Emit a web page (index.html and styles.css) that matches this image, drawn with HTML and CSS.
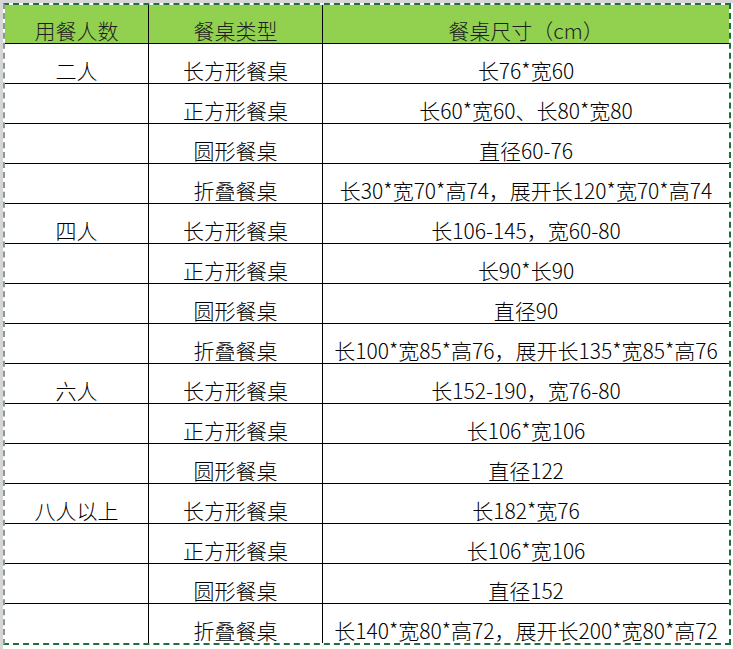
FILE: index.html
```html
<!DOCTYPE html>
<html lang="zh-CN">
<head>
<meta charset="utf-8">
<title>餐桌尺寸</title>
<link rel="stylesheet" href="styles.css">
</head>
<body>
<div class="page">
  <div class="frame">
    <div class="grid">
      <div class="c h">用餐人数</div><div class="c h">餐桌类型</div><div class="c h last">餐桌尺寸（cm）</div>

      <div class="c">二人</div><div class="c">长方形餐桌</div><div class="c last">长76*宽60</div>
      <div class="c"></div><div class="c">正方形餐桌</div><div class="c last">长60*宽60、长80*宽80</div>
      <div class="c"></div><div class="c">圆形餐桌</div><div class="c last">直径60-76</div>
      <div class="c"></div><div class="c">折叠餐桌</div><div class="c last">长30*宽70*高74，展开长120*宽70*高74</div>

      <div class="c">四人</div><div class="c">长方形餐桌</div><div class="c last">长106-145，宽60-80</div>
      <div class="c"></div><div class="c">正方形餐桌</div><div class="c last">长90*长90</div>
      <div class="c"></div><div class="c">圆形餐桌</div><div class="c last">直径90</div>
      <div class="c"></div><div class="c">折叠餐桌</div><div class="c last">长100*宽85*高76，展开长135*宽85*高76</div>

      <div class="c">六人</div><div class="c">长方形餐桌</div><div class="c last">长152-190，宽76-80</div>
      <div class="c"></div><div class="c">正方形餐桌</div><div class="c last">长106*宽106</div>
      <div class="c"></div><div class="c">圆形餐桌</div><div class="c last">直径122</div>

      <div class="c">八人以上</div><div class="c">长方形餐桌</div><div class="c last">长182*宽76</div>
      <div class="c"></div><div class="c">正方形餐桌</div><div class="c last">长106*宽106</div>
      <div class="c"></div><div class="c">圆形餐桌</div><div class="c last">直径152</div>
      <div class="c b"></div><div class="c b">折叠餐桌</div><div class="c b last">长140*宽80*高72，展开长200*宽80*高72</div>
    </div>
  </div>
</div>
</body>
</html>
```

FILE: styles.css
```css
html, body {
  margin: 0;
  padding: 0;
  background: #ffffff;
}
.page {
  width: 733px;
  height: 649px;
  overflow: hidden;
  background: linear-gradient(#d6d6d6, #d6d6d6) top left / 733px 3px no-repeat,
              linear-gradient(#d6d6d6, #d6d6d6) top left / 3px 649px no-repeat,
              #ffffff;
  padding: 3px 0 0 3px;
  box-sizing: border-box;
}
.frame {
  width: 728px;
  border: 2px dashed #1f6e3d;
  border-left-color: #8a9a8f;
  box-sizing: border-box;
}
.grid {
  display: grid;
  grid-template-columns: 144px 174px 406px;
  grid-template-rows: 39px repeat(14, 40px) 39px;
  font-family: "Noto Sans CJK SC", "Noto Sans", sans-serif;
  font-size: 21px;
  font-weight: 300;
  color: #000;
}
.c {
  box-sizing: border-box;
  border-right: 1px solid #000;
  border-bottom: 1px solid #000;
  display: flex;
  align-items: flex-end;
  justify-content: center;
  line-height: 26px;
  padding-bottom: 0;
  white-space: nowrap;
}
.c.last {
  border-right: none;
}
.c.b {
  border-bottom: none;
}
.h {
  background: #92d050;
  color: #1e1e1e;
}
```
